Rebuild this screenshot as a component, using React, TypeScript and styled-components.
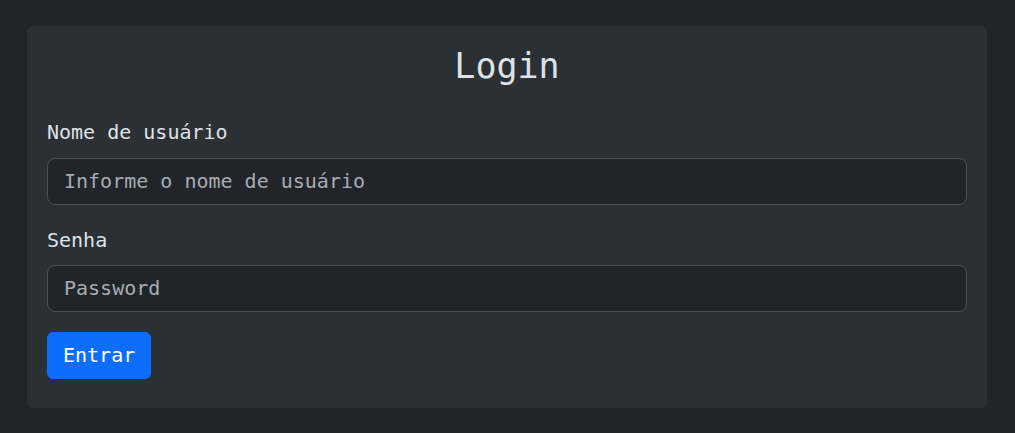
import React from "react";
import styled, { createGlobalStyle } from "styled-components";

const Global = createGlobalStyle`
  html, body { margin: 0; padding: 0; background: #212529; }
  body { font-family: "DejaVu Sans Mono", "Liberation Mono", monospace; color: #dee2e6; }
  * { box-sizing: border-box; }
`;

const Page = styled.div`
  padding: 26px 28px 25px 27px;
`;

const Card = styled.form`
  background: #2b3035;
  border-radius: 6px;
  padding: 20px 20px 29px 20px;
  display: flex;
  flex-direction: column;
`;

const Title = styled.h1`
  margin: 0 0 30px;
  font-size: 35px;
  line-height: 41px;
  font-weight: 400;
  text-align: center;
  color: #dee2e6;
`;

const Label = styled.label<{ $gap?: number }>`
  display: block;
  font-size: 20px;
  line-height: 30px;
  margin-bottom: ${(p) => p.$gap ?? 11}px;
  color: #dee2e6;
`;

const Input = styled.input`
  display: block;
  width: 100%;
  height: 47px;
  padding: 0 16px 2px;
  font-family: inherit;
  font-size: 20px;
  color: #dee2e6;
  background: #212529;
  border: 1px solid #495057;
  border-radius: 8px;
  margin-bottom: 20px;
  outline: none;
  &::placeholder { color: rgba(222, 226, 230, 0.72); }
`;

const Button = styled.button`
  align-self: flex-start;
  height: 47px;
  padding: 0 15px 2px;
  font-family: inherit;
  font-size: 20px;
  color: #fff;
  background: #0d6efd;
  border: 1px solid #0d6efd;
  border-radius: 6px;
`;

export default function App() {
  return (
    <>
      <Global />
      <Page>
        <Card onSubmit={(e) => e.preventDefault()}>
          <Title>Login</Title>
          <Label htmlFor="u">Nome de usuário</Label>
          <Input id="u" placeholder="Informe o nome de usuário" />
          <Label htmlFor="p" $gap={10}>Senha</Label>
          <Input id="p" type="password" placeholder="Password" />
          <Button type="submit">Entrar</Button>
        </Card>
      </Page>
    </>
  );
}
